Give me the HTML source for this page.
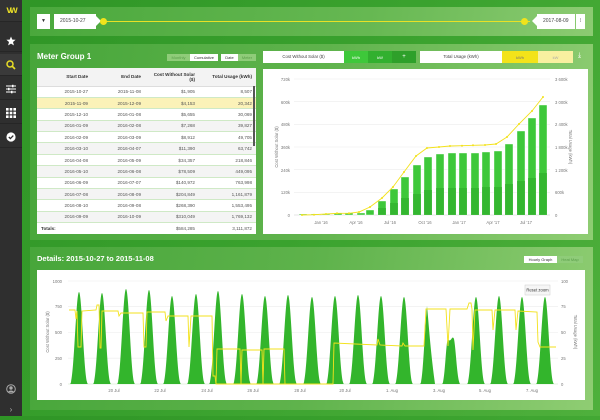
<!DOCTYPE html>
<html><head><meta charset="utf-8"><style>
*{margin:0;padding:0;box-sizing:border-box}
body{width:600px;height:416px;overflow:hidden;font-family:"Liberation Sans",sans-serif;background:linear-gradient(120deg,#2f9526 0%,#3aa22e 50%,#4fb03c 100%);position:relative}
.sb{position:absolute;left:0;top:0;width:22px;height:416px;background:#2f2f2f}
.sb .it{position:absolute;left:0;width:22px;height:22px;border-bottom:1px solid #262626;display:flex;align-items:center;justify-content:center}
.panel{position:absolute;background:linear-gradient(100deg,#47a63a 0%,#5fb34c 50%,#8fcd73 100%)}
.ab{position:absolute}
.t{position:absolute;font-size:4.5px;color:#555;white-space:nowrap}
table{border-collapse:collapse;width:100%;font-size:4.6px;color:#555}
td,th{text-align:right;padding:0 4px;height:11.4px;border-bottom:1px solid #cfe9c6}
th{font-weight:bold;color:#333;height:18px;background:#f3f3f3;border-bottom:1px solid #ddd}
tr.alt td{background:#f4f4f4}
tr.hl td{background:#fbf2b8}
.btn{position:absolute;height:7px;font-size:4px;display:flex;align-items:center;justify-content:center}
</style></head><body>
<div class="sb">
 <div class="it" style="top:0;height:22px;background:#333"><span style="color:#e8dd26;font-weight:bold;font-size:10px;letter-spacing:-2px">vw</span></div>
 <div class="it" style="top:30px"><svg width="10" height="10" viewBox="0 0 10 10"><path d="M5 0.5L6.3 3.6 9.6 3.8 7 6 7.9 9.4 5 7.6 2.1 9.4 3 6 0.4 3.8 3.7 3.6Z" fill="#fff"/></svg></div>
 <div class="it" style="top:54px;background:#3a3a3a"><svg width="10" height="10" viewBox="0 0 10 10"><circle cx="4" cy="4" r="3" stroke="#e8dd26" stroke-width="1.5" fill="none"/><path d="M6.2 6.2L9 9" stroke="#e8dd26" stroke-width="1.7"/></svg></div>
 <div class="it" style="top:78px"><svg width="10" height="10" viewBox="0 0 10 10"><path d="M0 2H10M0 5H10M0 8H10" stroke="#fff" stroke-width="1"/><rect x="6" y="0.8" width="1.5" height="2.5" fill="#fff"/><rect x="2" y="3.8" width="1.5" height="2.5" fill="#fff"/><rect x="5" y="6.8" width="1.5" height="2.5" fill="#fff"/></svg></div>
 <div class="it" style="top:102px"><svg width="10" height="10" viewBox="0 0 10 10" fill="#fff"><rect x="0" y="0" width="2.6" height="2.6"/><rect x="3.7" y="0" width="2.6" height="2.6"/><rect x="7.4" y="0" width="2.6" height="2.6"/><rect x="0" y="3.7" width="2.6" height="2.6"/><rect x="3.7" y="3.7" width="2.6" height="2.6"/><rect x="7.4" y="3.7" width="2.6" height="2.6"/><rect x="0" y="7.4" width="2.6" height="2.6"/><rect x="3.7" y="7.4" width="2.6" height="2.6"/><rect x="7.4" y="7.4" width="2.6" height="2.6"/></svg></div>
 <div class="it" style="top:126px"><svg width="10" height="10" viewBox="0 0 10 10"><circle cx="5" cy="5" r="4.6" fill="#fff"/><path d="M2.8 5L4.4 6.6 7.3 3.6" stroke="#2f2f2f" stroke-width="1.3" fill="none"/></svg></div>
 <div class="it" style="top:378px;border:none"><svg width="10" height="10" viewBox="0 0 10 10"><circle cx="5" cy="5" r="4.3" stroke="#aaa" fill="none"/><circle cx="5" cy="4" r="1.7" fill="#aaa"/><path d="M2 8.2C3 6 7 6 8 8.2" fill="#aaa"/></svg></div>
 <div class="it" style="top:398px;border:none;color:#aaa;font-size:8px">›</div>
</div>

<!-- top bar -->
<div class="panel" style="left:30px;top:7px;width:563px;height:29px;background:linear-gradient(100deg,#4aa83c,#66b852 60%,#8ccb72)"></div>
<div class="ab" style="left:37px;top:14px;width:13px;height:15px;background:#fff;font-size:5px;font-weight:bold;text-align:center;line-height:15px;color:#333">▼</div>
<div class="ab" style="left:54px;top:14px;width:42px;height:15px;background:#fff;font-size:5px;line-height:15px;padding-left:6px;color:#444">2015-10-27</div>
<div class="ab" style="left:96px;top:16px;width:0;height:0;border-top:5.5px solid transparent;border-bottom:5.5px solid transparent;border-left:5px solid #fff"></div>
<div class="ab" style="left:100px;top:21px;width:430px;height:1px;background:#e8e126"></div>
<div class="ab" style="left:100px;top:18px;width:7px;height:7px;border-radius:50%;background:#f0e31c"></div>
<div class="ab" style="left:521px;top:18px;width:7px;height:7px;border-radius:50%;background:#f0e31c"></div>
<div class="ab" style="left:532px;top:16px;width:0;height:0;border-top:5.5px solid transparent;border-bottom:5.5px solid transparent;border-right:5px solid #fff"></div>
<div class="ab" style="left:537px;top:14px;width:38px;height:15px;background:#fff;font-size:5px;line-height:15px;padding-left:6px;color:#444">2017-08-09</div>
<div class="ab" style="left:576px;top:14px;width:9px;height:15px;background:#fff;font-size:5px;line-height:15px;text-align:center;color:#333">⁞</div>

<!-- meter group panel -->
<div class="panel" style="left:30px;top:44px;width:563px;height:196px"></div>
<div class="ab" style="left:37px;top:52px;color:#fff;font-weight:bold;font-size:8px">Meter Group 1</div>
<div class="btn" style="left:167px;top:54px;width:23px;background:#8fcc79;color:#5a9e4a">Monthly</div>
<div class="btn" style="left:190px;top:54px;width:28px;background:#fff;color:#333">Cumulative</div>
<div class="btn" style="left:221px;top:54px;width:17px;background:#fff;color:#333">Date</div>
<div class="btn" style="left:238px;top:54px;width:18px;background:#8fcc79;color:#5a9e4a">Meter</div>
<div class="ab" style="left:37px;top:68px;width:219px;height:166px;background:#fff;overflow:hidden">
<table>
<tr><th style="width:55px">Start Date</th><th style="width:53px">End Date</th><th style="width:54px">Cost Without Solar<br>($)</th><th>Total Usage (kWh)</th></tr>
<tr><td>2015-10-27</td><td>2015-11-08</td><td>$1,905</td><td>8,507</td></tr>
<tr class="hl"><td>2015-11-09</td><td>2015-12-09</td><td>$4,153</td><td>20,342</td></tr>
<tr><td>2015-12-10</td><td>2016-01-08</td><td>$5,655</td><td>30,069</td></tr>
<tr class="alt"><td>2016-01-09</td><td>2016-02-08</td><td>$7,268</td><td>39,827</td></tr>
<tr><td>2016-02-09</td><td>2016-03-09</td><td>$8,912</td><td>49,705</td></tr>
<tr class="alt"><td>2016-03-10</td><td>2016-04-07</td><td>$11,390</td><td>63,742</td></tr>
<tr><td>2016-04-08</td><td>2016-05-09</td><td>$34,357</td><td>218,846</td></tr>
<tr class="alt"><td>2016-05-10</td><td>2016-06-08</td><td>$78,509</td><td>449,095</td></tr>
<tr><td>2016-06-09</td><td>2016-07-07</td><td>$140,972</td><td>763,998</td></tr>
<tr class="alt"><td>2016-07-08</td><td>2016-08-09</td><td>$204,849</td><td>1,161,879</td></tr>
<tr><td>2016-08-10</td><td>2016-09-08</td><td>$268,390</td><td>1,553,495</td></tr>
<tr class="alt"><td>2016-09-09</td><td>2016-10-09</td><td>$310,049</td><td>1,769,132</td></tr>
<tr><td style="text-align:left;font-weight:bold;color:#333">Totals:</td><td></td><td>$584,285</td><td>3,111,872</td></tr>
</table>
<div class="ab" style="left:216px;top:18px;width:2px;height:60px;background:#555"></div>
</div>

<!-- chart controls -->
<div class="ab" style="left:263px;top:51px;width:81px;height:12px;background:#fff;font-size:4.3px;line-height:12px;text-align:center;color:#444">Cost Without Solar ($)</div>
<div class="btn" style="left:344px;top:51px;width:24px;height:12px;background:#3ec83a;color:#fff">kWh</div>
<div class="btn" style="left:368px;top:51px;width:24px;height:12px;background:#32b02f;color:#fff">kW</div>
<div class="btn" style="left:392px;top:51px;width:24px;height:12px;background:#2ea02a;color:#fff;font-size:6px">+</div>
<div class="ab" style="left:420px;top:51px;width:82px;height:12px;background:#fff;font-size:4.3px;line-height:12px;text-align:center;color:#444">Total Usage (kWh)</div>
<div class="btn" style="left:502px;top:51px;width:36px;height:12px;background:#f3e31a;color:#777">kWh</div>
<div class="btn" style="left:538px;top:51px;width:35px;height:12px;background:#f8f0a0;color:#aaa">kW</div>
<div class="ab" style="left:578px;top:52px;color:#fff;font-size:7px">⤓</div>

<!-- top chart -->
<div class="ab" style="left:263px;top:69px;width:325px;height:165px;background:#fff"></div>
<svg class="ab" style="left:0;top:0" width="600" height="416">
<g stroke="#ececec" stroke-width="0.6"><line x1="294" y1="79" x2="550" y2="79"/><line x1="294" y1="101.7" x2="550" y2="101.7"/><line x1="294" y1="124.3" x2="550" y2="124.3"/><line x1="294" y1="147" x2="550" y2="147"/><line x1="294" y1="169.7" x2="550" y2="169.7"/><line x1="294" y1="192.3" x2="550" y2="192.3"/><line x1="294" y1="215" x2="550" y2="215" stroke="#ccc"/></g>
<g font-size="4.2" fill="#777" font-family="Liberation Sans">
<text x="290" y="81" text-anchor="end">720k</text><text x="290" y="104" text-anchor="end">600k</text><text x="290" y="126" text-anchor="end">480k</text><text x="290" y="149" text-anchor="end">360k</text><text x="290" y="172" text-anchor="end">240k</text><text x="290" y="194" text-anchor="end">120k</text><text x="290" y="217" text-anchor="end">0</text>
<text x="555" y="81">3 600k</text><text x="555" y="104">3 000k</text><text x="555" y="126">2 400k</text><text x="555" y="149">1 800k</text><text x="555" y="172">1 200k</text><text x="555" y="194">600k</text><text x="555" y="217">0</text>
<text x="321" y="224" text-anchor="middle">Jan '16</text><text x="356" y="224" text-anchor="middle">Apr '16</text><text x="390" y="224" text-anchor="middle">Jul '16</text><text x="425" y="224" text-anchor="middle">Oct '16</text><text x="459" y="224" text-anchor="middle">Jan '17</text><text x="493" y="224" text-anchor="middle">Apr '17</text><text x="526" y="224" text-anchor="middle">Jul '17</text>
<text transform="translate(278,147) rotate(-90)" text-anchor="middle">Cost Without Solar ($)</text>
<text transform="translate(569,147) rotate(90)" text-anchor="middle">Total Usage (kWh)</text>
</g>
<g fill="#3ec83a" stroke="#fff" stroke-width="0.4">
<rect x="299" y="214" width="8" height="1"/><rect x="311" y="214" width="8" height="1"/><rect x="322" y="214" width="8" height="1"/><rect x="334" y="213" width="8" height="2"/><rect x="345" y="213" width="8" height="2"/><rect x="357" y="213" width="8" height="2"/>
<rect x="366" y="210" width="8" height="5"/><rect x="378" y="201" width="8" height="14"/><rect x="390" y="189" width="8" height="26"/><rect x="401" y="177" width="8" height="38"/><rect x="413" y="165" width="8" height="50"/><rect x="424" y="157" width="8" height="58"/><rect x="436" y="154" width="8" height="61"/><rect x="448" y="153" width="8" height="62"/><rect x="459" y="153" width="8" height="62"/><rect x="471" y="153" width="8" height="62"/><rect x="482" y="152" width="8" height="63"/><rect x="494" y="151" width="8" height="64"/><rect x="505" y="144" width="8" height="71"/><rect x="517" y="131" width="8" height="84"/><rect x="528" y="118" width="8" height="97"/><rect x="539" y="105" width="8" height="110"/>
</g>
<g fill="#30b02c" opacity="0.7">
<rect x="378" y="208" width="8" height="7"/><rect x="390" y="203" width="8" height="12"/><rect x="401" y="198" width="8" height="17"/><rect x="413" y="194" width="8" height="21"/><rect x="424" y="190" width="8" height="25"/><rect x="436" y="188" width="8" height="27"/><rect x="448" y="188" width="8" height="27"/><rect x="459" y="188" width="8" height="27"/><rect x="471" y="188" width="8" height="27"/><rect x="482" y="187" width="8" height="28"/><rect x="494" y="187" width="8" height="28"/><rect x="505" y="184" width="8" height="31"/><rect x="517" y="181" width="8" height="34"/><rect x="528" y="178" width="8" height="37"/><rect x="539" y="173" width="8" height="42"/>
</g>
<polyline fill="none" stroke="#f3e21c" stroke-width="0.9" points="302,215 314,214.7 326,214 337,213.3 349,213.3 359,212 370,207 382,198 393,187 404,172 416,156 427,148 439,147 450,146 462,145.7 473,145.3 485,145 496,144 507,137 519,124 532,111 543,97"/>
<g fill="#f3e21c"><circle cx="302" cy="215" r="1"/><circle cx="314" cy="214.7" r="1"/><circle cx="326" cy="214" r="1"/><circle cx="337" cy="213.3" r="1"/><circle cx="349" cy="213.3" r="1"/><circle cx="359" cy="212" r="1"/><circle cx="370" cy="207" r="1"/><circle cx="382" cy="198" r="1"/><circle cx="393" cy="187" r="1"/><circle cx="404" cy="172" r="1"/><circle cx="416" cy="156" r="1"/><circle cx="427" cy="148" r="1"/><circle cx="439" cy="147" r="1"/><circle cx="450" cy="146" r="1"/><circle cx="462" cy="145.7" r="1"/><circle cx="473" cy="145.3" r="1"/><circle cx="485" cy="145" r="1"/><circle cx="496" cy="144" r="1"/><circle cx="507" cy="137" r="1"/><circle cx="519" cy="124" r="1"/><circle cx="532" cy="111" r="1"/><circle cx="543" cy="97" r="1"/></g>
</svg>

<!-- details panel -->
<div class="panel" style="left:30px;top:247px;width:563px;height:163px"></div>
<div class="ab" style="left:37px;top:254px;color:#fff;font-weight:bold;font-size:7.5px">Details: 2015-10-27 to 2015-11-08</div>
<div class="btn" style="left:524px;top:256px;width:33px;background:#fff;color:#333">Hourly Graph</div>
<div class="btn" style="left:557px;top:256px;width:26px;background:#8fcc79;color:#5a9e4a">Heat Map</div>
<div class="ab" style="left:37px;top:270px;width:548px;height:130px;background:#fff"></div>
<svg class="ab" style="left:0;top:0" width="600" height="416">
<g stroke="#ececec" stroke-width="0.6"><line x1="68" y1="281" x2="558" y2="281"/><line x1="68" y1="306.7" x2="558" y2="306.7"/><line x1="68" y1="332.5" x2="558" y2="332.5"/><line x1="68" y1="358.2" x2="558" y2="358.2"/><line x1="68" y1="384" x2="558" y2="384" stroke="#cde8c5"/></g>
<g font-size="4.2" fill="#777" font-family="Liberation Sans">
<text x="62" y="283" text-anchor="end">1000</text><text x="62" y="308" text-anchor="end">750</text><text x="62" y="334" text-anchor="end">500</text><text x="62" y="360" text-anchor="end">250</text><text x="62" y="386" text-anchor="end">0</text>
<text x="561" y="283">100</text><text x="561" y="308">75</text><text x="561" y="334">50</text><text x="561" y="360">25</text><text x="561" y="386">0</text>
<text x="114" y="392" text-anchor="middle">20 Jul</text><text x="160" y="392" text-anchor="middle">22 Jul</text><text x="207" y="392" text-anchor="middle">24 Jul</text><text x="253" y="392" text-anchor="middle">26 Jul</text><text x="300" y="392" text-anchor="middle">28 Jul</text><text x="345" y="392" text-anchor="middle">20 Jul</text><text x="392" y="392" text-anchor="middle">1. Aug</text><text x="439" y="392" text-anchor="middle">3. Aug</text><text x="485" y="392" text-anchor="middle">5. Aug</text><text x="532" y="392" text-anchor="middle">7. Aug</text>
<text transform="translate(49,332) rotate(-90)" text-anchor="middle">Cost Without Solar ($)</text>
<text transform="translate(574,332) rotate(90)" text-anchor="middle">Total Usage (kWh)</text>
</g>
<g fill="#33b52c">
<path d="M70,384 c4,0 6,-92 9,-92 c3,0 5,92 9,92z"/>
<path d="M93,384 c4,0 6,-91 9,-91 c3,0 5,91 9,91z"/>
<path d="M117,384 c4,0 6,-95 9,-95 c3,0 5,95 9,95z"/>
<path d="M140,384 c4,0 6,-94 9,-94 c3,0 5,94 9,94z"/>
<path d="M163,384 c4,0 6,-88 9,-88 c3,0 5,88 9,88z"/>
<path d="M187,384 c4,0 6,-90 9,-90 c3,0 5,90 9,90z"/>
<path d="M209,384 c4,0 6,-93 9,-93 c3,0 5,93 9,93z"/>
<path d="M233,384 c4,0 6,-90 9,-90 c3,0 5,90 9,90z"/>
<path d="M256,384 c4,0 6,-88 9,-88 c3,0 5,88 9,88z"/>
<path d="M279,384 c4,0 6,-89 9,-89 c3,0 5,89 9,89z"/>
<path d="M303,384 c4,0 6,-87 9,-87 c3,0 5,87 9,87z"/>
<path d="M326,384 c4,0 6,-88 9,-88 c3,0 5,88 9,88z"/>
<path d="M349,384 c4,0 6,-89 9,-89 c3,0 5,89 9,89z"/>
<path d="M372,384 c4,0 6,-88 9,-88 c3,0 5,88 9,88z"/>
<path d="M395,384 c4,0 6,-87 9,-87 c3,0 5,87 9,87z"/>
<path d="M420,384 c3,0 4,-45 7,-78 c2,20 3,40 8,78z"/>
<path d="M442,384 c3,0 4,-45 6,-45 c3,5 4,-5 6,0 c2,10 3,40 6,45z"/>
<path d="M467,384 c4,0 6,-87 9,-87 c3,0 5,87 9,87z"/>
<path d="M490,384 c4,0 6,-88 9,-88 c3,0 5,88 9,88z"/>
<path d="M513,384 c4,0 6,-87 9,-87 c3,0 5,87 9,87z"/>
<path d="M536,384 c4,0 6,-87 9,-87 c3,0 5,87 9,87z"/>
</g>
<polyline fill="none" stroke="#f3e21c" stroke-width="0.9" points="69,310 75,310 76,319 77,311 78,347 81,347 82,311 96,310 97,305 99,305 100,348 101,348 102,311 118,311 119,316 121,313 143,313 144,347 146,347 147,312 165,312 166,321 168,316 188,316 189,347 191,316 212,316 213,376 215,376 216,384 333,384 334,343 377,345 378,339 380,345 402,346 403,343 405,346 424,346 426,309 446,309 448,346 450,309 467,309 469,303 471,303 472,309 473,350 475,310 492,310 493,330 495,310 515,310 516,330 518,311 537,312 538,342 540,347 556,347"/>
<polyline fill="none" stroke="#f3e21c" stroke-width="0.9" points="216,384 217,349 240,349 241,384 242,350 262,350 263,384 264,349 284,349 285,384"/>
<rect x="525" y="285" width="25" height="10" fill="#f6f6f6" stroke="#ccc" stroke-width="0.5"/>
<text x="537.5" y="291.5" font-size="4.2" fill="#333" text-anchor="middle" font-family="Liberation Sans">Reset zoom</text>
</svg>
</body></html>
